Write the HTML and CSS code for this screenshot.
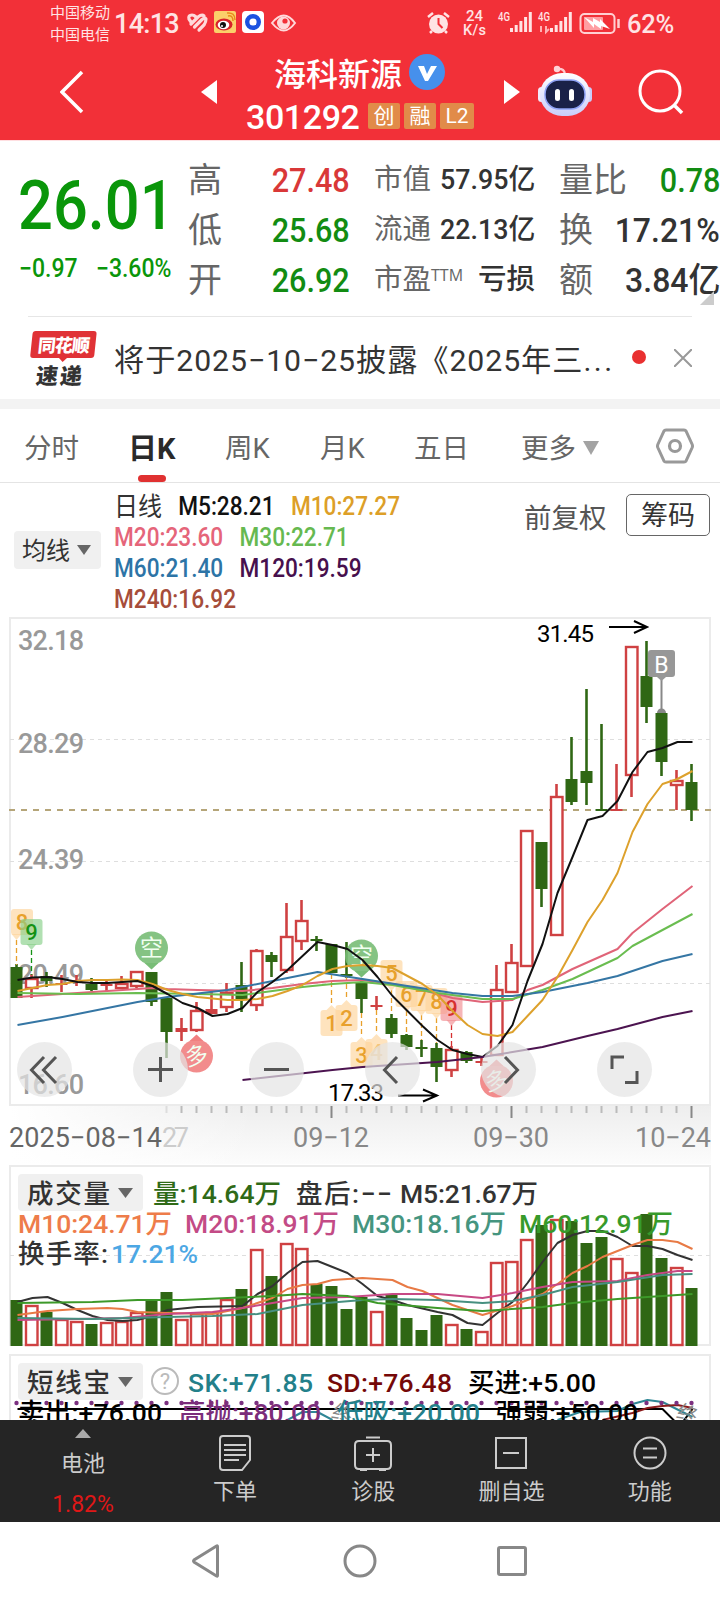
FILE: index.html
```html
<!DOCTYPE html>
<html lang="zh-CN">

<head>
	<meta charset="utf-8">
	<title>海科新源 301292</title>
	<link rel="stylesheet" href="styles.css">
</head>

<body>
	<header class="top">
		<div class="status">
			<div class="carriers"><span>中国移动</span><span>中国电信</span></div>
			<span class="clock">14:13</span>
			<svg class="status-icons" width="112" height="46" viewBox="186 0 112 46">
				<g fill="none" stroke="#ffd9da" stroke-width="3.2" stroke-linecap="round">
					<path d="M191 22l-2-3q-1-4 3-4 2 0 4 2" />
					<path d="M191 24l7-7q4-3 6-1" />
					<path d="M194.500 27l7-7q3-3 4.500-1M199 30l5-5q2-3 2-6" />
				</g>
				<rect x="214" y="11" width="22" height="22" rx="2" fill="#fbd06a" />
				<ellipse cx="224" cy="24.500" rx="8.500" ry="6" fill="#d8232a" />
				<ellipse cx="223.500" cy="25" rx="5.800" ry="4.200" fill="#fff" />
				<circle cx="223" cy="25" r="3" fill="#111" />
				<circle cx="222" cy="26" r="1" fill="#fff" />
				<path d="M228 16q5-1 5 5M227 13q8-1 8 7" fill="none" stroke="#e88a1c" stroke-width="1.500" />
				<rect x="242" y="11" width="22" height="22" rx="4" fill="#fff" />
				<circle cx="253" cy="22" r="5.800" fill="none" stroke="#1c52e0" stroke-width="4.400" />
				<path d="M253 22h3v3h-3z" fill="#fff" />
				<path d="M272 23q12-15 23 0q-11 15-23 0z" fill="none" stroke="#ffd9da" stroke-width="2" />
				<circle cx="283.500" cy="23" r="6.500" fill="#ffd9da" />
				<circle cx="285" cy="21" r="2.600" fill="#f23038" />
			</svg>
			<svg class="status-right" width="200" height="46" viewBox="420 0 200 46">
				<circle cx="438.500" cy="24" r="9.500" fill="#ffe3e4" />
				<path d="M438.500 18v6l4 4" fill="none" stroke="#f23038" stroke-width="2" />
				<path d="M428 17l5-4M449 17l-5-4M432 31l-2 2M445 31l2 2" stroke="#ffe3e4" stroke-width="2.500" />
				<g fill="#ffe3e4" class="num">
					<text x="466" y="21" font-size="15" font-weight="500">24</text>
					<text x="463" y="35" font-size="14.500" font-weight="500" textLength="23">K/s</text>
					<text x="498" y="21" font-size="12" font-weight="500" textLength="12" lengthAdjust="spacingAndGlyphs">4G</text>
					<text x="538" y="21" font-size="12" font-weight="500" textLength="12" lengthAdjust="spacingAndGlyphs">4G</text>
				</g>
				<path d="M511.500 28v4M516.200 25v7M520.900 21v11M525.600 17v15M530.300 12v20M551.500 28v4M556.200 25v7M560.900 21v11M565.600 17v15M570.300 12v20" stroke="#ffe3e4" stroke-width="3" />
				<path d="M541 26v6M546 26v6l3-3" stroke="#ffb0b3" fill="none" stroke-width="2" />
				<rect x="580.500" y="14" width="34" height="19" rx="4" fill="none" stroke="#ffd0d2" stroke-width="2" />
				<rect x="584" y="17" width="19" height="13" rx="1" fill="#ff9ea2" />
				<path d="M584 17l9 5v-4l7 4v-3l10 10-9-3v3l-7-5v4z" fill="#fff" />
				<path d="M618.500 19v9" stroke="#ffd0d2" stroke-width="2.500" />
			</svg>
			<span class="percent">62%</span>
		</div>
		<div class="titlebar">
			<svg class="back" width="24" height="44" viewBox="0 0 24 44">
				<path d="M22 2L2 22l20 20" fill="none" stroke="#fff" stroke-width="3.500" />
			</svg>
			<svg class="prev" width="16" height="24" viewBox="0 0 16 24"><path d="M16 0v24L0 12z" fill="#fff" /></svg>
			<div class="stock">
				<div class="stock-name">
					<span>海科新源</span>
					<svg width="36" height="36" viewBox="0 0 36 36">
						<circle cx="18" cy="18" r="18" fill="#4690ec" />
						<path d="M9 12h6l3 8 4-8h6l-9 15h-3z" fill="#fff" />
					</svg>
				</div>
				<div class="stock-code">
					<span class="code">301292</span>
					<span class="tag">创</span><span class="tag">融</span><span class="tag tag-l2">L2</span>
				</div>
			</div>
			<svg class="next" width="16" height="24" viewBox="0 0 16 24"><path d="M0 0v24l16-12z" fill="#fff" /></svg>
			<svg class="robot" width="56" height="54" viewBox="0 0 56 54">
				<defs>
					<linearGradient id="shell" x2="0" y2="1">
						<stop offset="0" stop-color="#fff" />
						<stop offset="1" stop-color="#c9cdfa" />
					</linearGradient>
				</defs>
				<path d="M20 5q8-1 8 6" fill="none" stroke="#ffc9cf" stroke-width="2.500" />
				<circle cx="20" cy="5" r="3.200" fill="#ffd3d7" />
				<rect x="1" y="23" width="7" height="15" rx="3.500" fill="#f2e9fb" />
				<rect x="48" y="23" width="7" height="15" rx="3.500" fill="#c9cdfa" />
				<rect x="3" y="9" width="50" height="43" rx="22" fill="url(#shell)" />
				<rect x="8" y="16" width="40" height="29" rx="14" fill="#1a2148" stroke="#8fa2f5" stroke-width="1.500" />
				<rect x="18" y="25" width="5" height="12" rx="2.500" fill="#fff" />
				<rect x="32" y="25" width="5" height="12" rx="2.500" fill="#fff" />
			</svg>
			<svg class="search" width="46" height="46" viewBox="0 0 46 46">
				<circle cx="22" cy="22" r="20" fill="none" stroke="#fff" stroke-width="3" />
				<path d="M36 36l8 8" stroke="#fff" stroke-width="3.500" />
			</svg>
		</div>
	</header>

	<section class="quote">
		<div class="price">
			<div class="price-now">26.01</div>
			<div class="price-change"><span>−0.97</span><span>−3.60%</span></div>
		</div>
		<div class="stats stats-wide">
			<div class="stat"><span class="label">高</span><span class="value up">27.48</span></div>
			<div class="stat"><span class="label">低</span><span class="value down">25.68</span></div>
			<div class="stat"><span class="label">开</span><span class="value down">26.92</span></div>
		</div>
		<div class="stats stats-small">
			<div class="stat"><span class="label">市值</span><span class="value">57.95亿</span></div>
			<div class="stat"><span class="label">流通</span><span class="value">22.13亿</span></div>
			<div class="stat"><span class="label">市盈<sup>TTM</sup></span><span class="value plain">亏损</span></div>
		</div>
		<div class="stats">
			<div class="stat"><span class="label">量比</span><span class="value down">0.78</span></div>
			<div class="stat"><span class="label">换</span><span class="value wide">17.21%</span></div>
			<div class="stat"><span class="label">额</span><span class="value wide">3.84亿</span></div>
		</div>
		<div class="corner"></div>
	</section>

	<section class="news">
		<div class="news-logo">
			<div class="news-brand">同花顺</div>
			<div class="news-word">速递</div>
		</div>
		<div class="news-text">将于2025−10−25披露《2025年三<span>...</span></div>
		<div class="news-dot"></div>
		<svg class="news-close" width="18" height="18" viewBox="0 0 18 18">
			<path d="M0 0l18 18M18 0L0 18" stroke="#999" stroke-width="2" />
		</svg>
	</section>

	<nav class="tabs">
		<span class="tab tab-time">分时</span>
		<span class="tab tab-day active">日K</span>
		<span class="tab tab-week">周K</span>
		<span class="tab tab-month">月K</span>
		<span class="tab tab-five">五日</span>
		<span class="tab tab-more">更多<i class="caret"></i></span>
		<svg class="settings" width="38" height="36" viewBox="0 0 38 36">
			<path d="M10 2h18q1.500 0 2.200 1.300l6 13.200q.6 1.500 0 3l-6 13.200q-.7 1.300-2.200 1.300H10q-1.500 0-2.200-1.300l-6-13.200q-.6-1.500 0-3l6-13.200q.7-1.300 2.200-1.300z" fill="none" stroke="#999" stroke-width="3" />
			<circle cx="19" cy="18" r="5.500" fill="none" stroke="#999" stroke-width="3.200" />
		</svg>
	</nav>

	<section class="legend">
		<div class="picker">均线<i class="caret"></i></div>
		<div class="averages">
			<div><span class="line-name">日线</span><span class="m5">M5:28.21</span><span class="m10">M10:27.27</span></div>
			<div><span class="m20">M20:23.60</span><span class="m30">M30:22.71</span></div>
			<div><span class="m60">M60:21.40</span><span class="m120">M120:19.59</span></div>
			<div><span class="m240">M240:16.92</span></div>
		</div>
		<div class="rights">前复权</div>
		<div class="chips">筹码</div>
	</section>

	<svg class="chart" width="720" height="811" viewBox="0 609 720 811">
		<defs>
			<linearGradient id="axis-shade" x2="0" y2="1">
				<stop offset="0" stop-color="#eeeeee" />
				<stop offset="1" stop-color="#fcfcfc" />
			</linearGradient>
			<linearGradient id="axis-fade">
				<stop offset="0" stop-color="#fff" />
				<stop offset=".35" stop-color="#fff" stop-opacity="0" />
			</linearGradient>
		</defs>
		<rect x="10" y="1106" width="701" height="58" fill="url(#axis-shade)" />
		<rect x="10" y="1106" width="701" height="58" fill="url(#axis-fade)" />
		<g class="frame">
			<path d="M10 618H711M10 1105H711M10 617V1106M710 617V1106" />
			<path d="M10 1166H711M10 1165V1346M710 1165V1346M10 1345H711" />
			<path d="M10 1355H711M10 1354V1420M710 1354V1420" />
		</g>
		<path class="grid" d="M10 739.500H711M10 861.500H711M10 983.500H711M10 1255.500H711" />
		<g class="scale num">
			<text x="18" y="650" textLength="66">32.18</text>
			<text x="18" y="753" textLength="66">28.29</text>
			<text x="18" y="869" textLength="66">24.39</text>
			<text x="18" y="984" textLength="66">20.49</text>
			<text x="18" y="1094" textLength="66">16.60</text>
		</g>
		<path class="last-price" d="M9 810H711" />
		<g id="candles"></g>
		<g id="flags"></g>
		<g id="price-lines"></g>

		<g class="num extreme">
			<text x="537" y="642" textLength="57">31.45</text>
			<text x="328" y="1101" textLength="56">17.33</text>
			<path d="M609 627H646M634 621L647 627L634 633M398 1095.500H436M423 1089.500L437 1095.500L423 1101.500" />
		</g>
		<path d="M661.500 680V713" stroke="#888" stroke-width="2" />
		<path d="M657 713a4.500 4.500 0 0 1 9 0z" fill="#888" />
		<path d="M651 650h21q3 0 3 3v21q0 3-3 3h-6l-4.500 4-4.500-4h-6q-3 0-3-3v-21q0-3 3-3z" fill="#979797" />
		<text class="num" x="661.500" y="672.500" font-size="23" fill="#fff" text-anchor="middle">B</text>

		<g id="controls" class="controls">
			<circle cx="44.500" cy="1069.500" r="27.500" />
			<path d="M44 1057L31.500 1070L44 1083M56 1057L43.500 1070L56 1083" />
			<circle cx="160.500" cy="1069.500" r="27.500" />
			<path d="M148 1069.500H173M160.500 1057V1082" />
			<circle cx="276.500" cy="1069.500" r="27.500" />
			<path d="M264 1069.500H289" />
			<circle cx="392.500" cy="1069.500" r="27.500" />
			<path d="M397 1057L384.500 1070L397 1083" />
			<circle cx="508.500" cy="1069.500" r="27.500" />
			<path d="M505 1057L517.500 1070L505 1083" />
			<circle cx="624.500" cy="1069.500" r="27.500" />
			<path d="M612 1069V1057H624M637 1071V1082.500H625" />
		</g>

		<g id="ticks"></g>
		<g class="dates num">
			<text x="9" y="1147" textLength="153" fill="#666">2025−08−14</text>
			<text x="162" y="1147" textLength="27" fill="#ccc">27</text>
			<text x="293" y="1147" textLength="76">09−12</text>
			<text x="473" y="1147" textLength="76">09−30</text>
			<text x="635" y="1147" textLength="76">10−24</text>
		</g>

		<g id="volumes"></g>
		<g id="volume-lines"></g>
		<g id="signal"></g>

		<rect class="box" x="18" y="1174" width="125" height="37" rx="4" />
		<path d="M118 1188h15l-7.500 10z" fill="#666" />
		<rect class="box" x="18" y="1363" width="125" height="37" rx="4" />
		<path d="M118 1377h15l-7.500 10z" fill="#666" />
		<circle cx="165" cy="1381" r="13" fill="none" stroke="#bbb" stroke-width="2" />
		<text class="num" x="165" y="1389" font-size="22" text-anchor="middle" fill="#bbb">?</text>
		<g class="readout num">
			<text x="27" y="1203" textLength="83">成交量</text>
			<text x="153" y="1203" textLength="128" fill="#2f6a17">量:14.64万</text>
			<text x="296" y="1203" textLength="96">盘后:−−</text>
			<text x="400" y="1203" textLength="138">M5:21.67万</text>
			<text x="18" y="1233" textLength="154" fill="#ee7c4a">M10:24.71万</text>
			<text x="185" y="1233" textLength="154" fill="#c34b86">M20:18.91万</text>
			<text x="352" y="1233" textLength="154" fill="#45957f">M30:18.16万</text>
			<text x="519" y="1233" textLength="154" fill="#379a2b">M60:12.91万</text>
			<text x="18" y="1263" textLength="90">换手率:</text>
			<text x="111" y="1263" textLength="87" fill="#4ca7e4">17.21%</text>
			<text x="27" y="1392" textLength="83">短线宝</text>
			<text x="188" y="1392" textLength="125" fill="#23808a">SK:+71.85</text>
			<text x="327" y="1392" textLength="125" fill="#750808">SD:+76.48</text>
			<text x="468" y="1392" textLength="128" fill="#000">买进:+5.00</text>
			<text x="18" y="1422" textLength="144" fill="#000">卖出:+76.00</text>
			<text x="179" y="1422" textLength="142" fill="#7b2c7b">高抛:+80.00</text>
			<text x="337" y="1422" textLength="143" fill="#23808a">低吸:+20.00</text>
			<text x="496" y="1422" textLength="142" fill="#000">强弱:+50.00</text>
		</g>
	</svg>

	<footer class="toolbar">
		<div class="battery">
			<i></i>
			<span>电池</span>
			<b>1.82%</b>
		</div>
		<div class="tool">
			<svg width="38" height="38" viewBox="0 0 38 38">
				<path d="M7 2h24q3 0 3 3v21l-8 10H7q-3 0-3-3V5q0-3 3-3zM8 11h22M8 16h22M8 21h22M8 26h15" />
			</svg>
			<span>下单</span>
		</div>
		<div class="tool">
			<svg width="38" height="38" viewBox="0 0 38 38">
				<path d="M5 7h28q4 0 4 4v20q0 4-4 4H5q-4 0-4-4V11q0-4 4-4zM12 3.500h14M19 14v14M12 21h14M6 36h7M25 36h7" />
			</svg>
			<span>诊股</span>
		</div>
		<div class="tool">
			<svg width="38" height="38" viewBox="0 0 38 38">
				<path d="M4 4h30v30H4zM11 19h16" />
			</svg>
			<span>删自选</span>
		</div>
		<div class="tool">
			<svg width="38" height="38" viewBox="0 0 38 38">
				<circle cx="19" cy="19" r="15.500" />
				<path d="M12 14.500h14M12 23.500h14" />
			</svg>
			<span>功能</span>
		</div>
	</footer>

	<div class="system-nav">
		<svg width="30" height="34" viewBox="0 0 30 34">
			<path d="M26.500 2.500v29q0 1-1 .5L3 18q-1-1 0-2L25.500 2q1-.5 1 .5z" />
		</svg>
		<svg width="34" height="34" viewBox="0 0 34 34"><circle cx="17" cy="17" r="15" /></svg>
		<svg width="32" height="34" viewBox="0 0 32 34"><rect x="2.500" y="3.500" width="27" height="27" rx="1.500" /></svg>
	</div>

	<script src="chart.js"></script>
</body>

</html>
```

FILE: styles.css
```css
body {
	margin: 0;
	width: 720px;
	height: 1600px;
	overflow: hidden;
	background: #fff;
	color: #333;
	font-family: Roboto, 'Noto Sans CJK SC', sans-serif;
}

svg {
	display: block;
	flex: none;
}

i,
b {
	font-style: normal;
	font-weight: normal;
}

.num {
	font-family: Roboto, 'Noto Sans CJK SC', sans-serif;
}

/* status bar and title */
.top {
	height: 140px;
	background: #f23038;
	color: #fff;
	border-bottom: 1px solid #ffdfe1;
}

.status {
	display: flex;
	align-items: center;
	height: 46px;
	color: #ffe3e4;
}

.carriers {
	display: flex;
	flex-direction: column;
	width: 64px;
	margin-left: 50px;
	padding-top: 1px;
	font-size: 15px;
	line-height: 22px;
}

.clock {
	width: 66px;
	margin-top: 2px;
	font-size: 27px;
	font-weight: 500;
	letter-spacing: -0.7px;
}

.status-icons {
	margin-left: 6px;
}

.status-right {
	margin-left: 122px;
}

.percent {
	margin: 2px 0 0 7px;
	font-size: 25.500px;
	font-weight: 500;
	letter-spacing: -0.3px;
}

.titlebar {
	display: flex;
	align-items: center;
	height: 92px;
}

.back {
	margin-left: 60px;
}

.prev {
	margin-left: 117px;
}

.stock {
	width: 257px;
	margin-left: 31px;
}

.stock-name {
	display: flex;
	align-items: center;
	height: 42px;
	padding: 1px 0 0 26px;
	font-size: 32px;
	font-weight: 500;
	gap: 7px;
}

.stock-name span {
	width: 128px;
	white-space: nowrap;
}

.stock-code {
	display: flex;
	align-items: center;
	height: 40px;
	margin-left: -2px;
	padding-top: 1px;
	gap: 4px;
}

.code {
	width: 118px;
	padding-top: 5px;
	font-size: 34px;
	line-height: 36px;
	font-weight: 500;
	letter-spacing: -0.4px;
}

.tag {
	width: 32px;
	height: 26px;
	margin-top: 4px;
	border-radius: 2px;
	background: #e18b49;
	font-size: 21px;
	line-height: 26px;
	text-align: center;
}

.tag-l2 {
	width: 34px;
}

.next {
	margin-left: -1px;
}

.robot {
	margin: -3px 0 0 17px;
}

.search {
	margin-left: 45px;
}

/* quote */
.quote {
	position: relative;
	display: flex;
	height: 175px;
}

.price {
	width: 188px;
	color: #0a960a;
}

.price-now {
	height: 64px;
	margin: 33px 0 0 18px;
	font-size: 69px;
	line-height: 64px;
	font-weight: 500;
	transform: scaleX(.89);
	transform-origin: left;
}

.price-change {
	display: flex;
	gap: 20px;
	margin: 15px 0 0 19px;
	font-size: 25px;
	line-height: 32px;
	font-weight: 500;
	transform: scaleX(.92);
	transform-origin: left;
	white-space: nowrap;
}

.stats {
	width: 161px;
	margin-left: 24px;
	padding-top: 14px;
	font-size: 34px;
}

.stats-wide {
	width: 162px;
	margin-left: 0;
}

.stats-small {
	font-size: 28.500px;
}

.stat {
	display: flex;
	justify-content: space-between;
	height: 50px;
	line-height: 50px;
	white-space: nowrap;
}

.label {
	color: #666;
}

.label sup {
	font-family: "Open Sans", sans-serif;
	font-size: 16px;
	font-weight: 400;
	line-height: 0;
	vertical-align: 8px;
}

.value {
	font-weight: 500;
	transform: scaleX(.9);
	transform-origin: right;
}

.stats-small .value,
.value.wide {
	transform: scaleX(.94);
}

.stats-small .plain {
	transform: none;
}

.up {
	color: #d93838;
}

.down {
	color: #128c12;
}

.corner {
	position: absolute;
	right: 6px;
	bottom: 11px;
	border-bottom: 14px solid #ccc;
	border-left: 14px solid transparent;
}

/* news */
.news {
	display: flex;
	align-items: center;
	height: 82px;
	margin: 0 28px;
	border-top: 1px solid #e6e6e6;
}

.news-logo {
	width: 64px;
	height: 54px;
	margin-left: 2px;
	font-family: 'Noto Sans CJK SC', sans-serif;
	font-weight: 900;
	text-align: center;
	transform: skewX(-6deg);
}

.news-brand {
	position: relative;
	height: 27px;
	border-radius: 3px;
	background: #e03236;
	color: #fff;
	font-size: 18px;
	line-height: 27px;
	letter-spacing: -1px;
}

.news-brand::after {
	content: '';
	position: absolute;
	left: 29px;
	top: 27px;
	border: 4px solid transparent;
	border-top-color: #e03236;
	border-bottom: 0;
}

.news-word {
	font-size: 22px;
	line-height: 33px;
	letter-spacing: 2px;
}

.news-text {
	width: 508px;
	margin-left: 20px;
	font-size: 30.200px;
	letter-spacing: 0.95px;
	white-space: nowrap;
}

.news-text span {
	letter-spacing: 2.500px;
}

.news-dot {
	width: 14px;
	height: 14px;
	margin: -2px 0 0 10px;
	border-radius: 50%;
	background: #e93030;
}

.news-close {
	margin-left: 28px;
}

/* period tabs */
.tabs {
	position: relative;
	display: flex;
	align-items: center;
	height: 73px;
	border-top: 10px solid #f3f3f3;
	border-bottom: 1px solid #e4e4e4;
	color: #666;
	font-size: 27.500px;
	white-space: nowrap;
}

.tab {
	width: 95px;
}

.tab-time {
	width: 104px;
	margin-left: 24px;
}

.tab-day {
	width: 97px;
}

.tab-month {
	width: 94px;
}

.tab-five {
	width: 107px;
}

.tab-more {
	width: 135px;
}

.active {
	position: relative;
	color: #2a2a2a;
	font-size: 29px;
	font-weight: 700;
}

.active::after {
	content: '';
	position: absolute;
	left: 10px;
	bottom: -15px;
	width: 28px;
	height: 7px;
	border-radius: 4px;
	background: #e03131;
}

.caret {
	display: inline-block;
	margin-left: 7px;
	border: 7px solid transparent;
	border-top: 10px solid #666;
	border-bottom: 0;
	vertical-align: 4px;
}

.tab-more .caret {
	border-width: 14px 8.500px 0;
	border-top-color: #a3a3a3;
	vertical-align: 3px;
}

/* moving averages */
.legend {
	display: flex;
	height: 126px;
}

.picker {
	width: 79px;
	height: 37px;
	margin: 48px 0 0 14px;
	padding: 1px 0 0 8px;
	border-radius: 4px;
	background: #f0f0f0;
	font-size: 24px;
	line-height: 39px;
	white-space: nowrap;
}

.averages {
	width: 410px;
	margin: 8px 0 0 13px;
	font-size: 25px;
	line-height: 31px;
	font-weight: 500;
}

.averages div {
	display: flex;
	gap: 18px;
	transform: scaleX(.905);
	transform-origin: left;
	white-space: nowrap;
}

.line-name {
	font-size: 26.500px;
	font-weight: 400;
}

.m5 {
	color: #111;
}

.m10 {
	color: #dd9f28;
}

.m20 {
	color: #e5657a;
}

.m30 {
	color: #66b950;
}

.m60 {
	color: #2d74a6;
}

.m120 {
	color: #47104d;
}

.m240 {
	color: #a64d3a;
}

.rights {
	width: 102px;
	margin-top: 16px;
	font-size: 27.500px;
	line-height: 40px;
	color: #555;
	white-space: nowrap;
}

.chips {
	box-sizing: border-box;
	width: 84px;
	height: 42px;
	margin-top: 11px;
	border: 1.500px solid #666;
	border-radius: 5px;
	font-size: 27px;
	line-height: 43px;
	text-align: center;
}

/* charts */
.frame {
	fill: none;
	stroke: #ebebeb;
	stroke-width: 2;
}

.grid {
	stroke: #dedede;
	stroke-dasharray: 4 4;
}

.last-price {
	stroke: #b5a579;
	stroke-width: 2;
	stroke-dasharray: 6 6;
}

.scale {
	fill: #999;
	font-size: 27px;
	font-weight: 500;
}

.dates {
	fill: #888;
	font-size: 27px;
}

.extreme {
	font-size: 24px;
}

.extreme path {
	fill: none;
	stroke: #000;
	stroke-width: 2;
}

.ma {
	fill: none;
	stroke-width: 2;
	stroke-linejoin: round;
}

.controls circle {
	fill: #e4e4e4;
	opacity: .7;
}

.controls path {
	fill: none;
	stroke: #555;
	stroke-width: 3;
}

.box {
	fill: #f0f0f0;
}

.readout {
	fill: #333;
	font-size: 26.500px;
	font-weight: 500;
}

/* bottom toolbar */
.toolbar {
	display: flex;
	height: 102px;
	background: #252525;
	color: #ccc;
	font-size: 22px;
}

.battery {
	display: flex;
	flex-direction: column;
	align-items: center;
	width: 166px;
}

.battery i {
	margin-top: 9px;
	border: 8px solid transparent;
	border-top: 0;
	border-bottom: 9px solid #aaa;
}

.battery span {
	margin-top: 10px;
	line-height: 32px;
}

.battery b {
	margin-top: 9px;
	color: #df1717;
	font-size: 23px;
	line-height: 32px;
}

.tool {
	display: flex;
	flex-direction: column;
	align-items: center;
	width: 138.200px;
	padding-top: 14px;
}

.tool svg {
	fill: none;
	stroke: #ccc;
	stroke-width: 2;
}

.tool span {
	margin-top: 4px;
	line-height: 32px;
}

.system-nav {
	display: flex;
	align-items: center;
	height: 78px;
	padding-left: 191px;
	gap: 122px;
	fill: none;
	stroke: #888;
	stroke-width: 3;
}

.system-nav svg + svg + svg {
	margin-left: -3px;
}
```

FILE: chart.js
```js
const RED = '#cf4142';
const GREEN = '#2f6714';
const STEP = 15;
const at = i => 16.5 + i * STEP;

function draw(parent, name, attrs, text) {
	const el = document.createElementNS('http://www.w3.org/2000/svg', name);
	Object.entries(attrs).forEach(([k, v]) => el.setAttribute(k, v));
	if (text) el.textContent = text;
	document.querySelector(parent).appendChild(el);
}

// [color, high, body top, body bottom, low, solid], in chart units
const candles = [
	['g', 964, 967, 998, 998], ['r', 974, 979, 988, 998], ['g', 972, 976, 981, 987], ['r', 975, 983, 985, 992],
	['r', 975, 980, 982, 986], ['g', 978, 984, 990, 991], ['r', 980, 984, 986, 992], ['r', 976, 984, 988, 989],
	['r', 971, 972, 986, 988], ['g', 972, 972, 1002, 1006], ['g', 998, 998, 1032, 1058], ['r', 1018, 1028, 1032, 1041, 1],
	['r', 1002, 1011, 1030, 1032], ['r', 992, 1009, 1014, 1014, 1], ['r', 983, 993, 1007, 1012], ['g', 962, 985, 1000, 1012],
	['r', 949, 951, 1005, 1011], ['g', 952, 955, 962, 977], ['r', 903, 937, 970, 973], ['r', 900, 921, 941, 950],
	['g', 936, 939, 941, 951], ['g', 944, 944, 973, 973], ['g', 942, 974, 976, 978], ['g', 978, 983, 999, 1013],
	['r', 996, 1005, 1007, 1010], ['g', 1014, 1018, 1034, 1038], ['g', 1034, 1035, 1047, 1050], ['g', 1040, 1047, 1049, 1057],
	['g', 1043, 1048, 1067, 1082], ['r', 1046, 1050, 1070, 1077], ['g', 1051, 1052, 1061, 1063], ['r', 1058, 1061, 1063, 1066],
	['r', 965, 990, 1055, 1055], ['r', 944, 963, 992, 993], ['r', 831, 831, 966, 966], ['g', 842, 842, 889, 907],
	['r', 784, 797, 935, 935], ['g', 737, 779, 802, 805], ['g', 689, 771, 783, 805], ['g', 724, 809, 811, 811],
	['r', 764, 809, 811, 811], ['r', 647, 647, 775, 797], ['g', 641, 676, 707, 723], ['g', 713, 713, 762, 776],
	['r', 770, 781, 785, 810], ['g', 764, 782, 810, 821],
];
const volumes = [
	1300, 1306, 1312, 1320, 1322, 1324, 1323, 1322, 1313, 1299, 1292, 1320, 1314, 1313, 1300, 1289,
	1250, 1276, 1244, 1249, 1284, 1286, 1309, 1297, 1312, 1294, 1318, 1330, 1315, 1325, 1329, 1332,
	1263, 1262, 1240, 1225, 1220, 1221, 1243, 1237, 1259, 1273, 1214, 1258, 1268, 1288,
];

function bar(parent, x, top, bottom, hollow, color) {
	draw(parent, 'rect', hollow
		? { x: x - 5.5, y: top, width: 11.5, height: bottom - top, fill: '#fff', stroke: color, 'stroke-width': 2.4 }
		: { x: x - 6, y: top, width: 12, height: bottom - top, fill: color });
}

candles.forEach(([type, high, top, bottom, low, solid], i) => {
	const color = type === 'g' ? GREEN : RED;
	draw('#candles', 'path', { d: `M${at(i)} ${high}V${low}`, stroke: color, 'stroke-width': 2.6 });
	bar('#candles', at(i), top, bottom, type === 'r' && bottom - top > 2 && !solid, color);
	bar('#volumes', at(i), volumes[i], type === 'r' ? 1345 : 1346, type === 'r', color);
});

function line(parent, color, points) {
	draw(parent, 'path', { class: 'ma', stroke: color, d: 'M' + points.map(([i, y]) => `${at(i) + 1} ${y}`).join('L') });
}

line('#price-lines', '#e06478', [[0, 997], [2, 995], [4, 993], [6, 991], [9, 988], [10, 989], [12, 990], [15, 991], [17, 988], [19, 984], [21, 981], [23, 980], [25, 984], [27, 990], [29, 998], [31, 1002], [33, 1000], [34, 990], [35, 985], [37, 969], [40, 949], [41, 933], [43, 909], [45, 886]]);
line('#price-lines', '#6abd50', [[0, 993], [4, 994], [8, 993], [12, 994], [15, 995], [17, 991], [19, 987], [21, 984], [23, 982], [25, 985], [28, 993], [31, 999], [33, 999], [35, 990], [37, 979], [40, 958], [41, 946], [43, 930], [45, 914]]);
line('#price-lines', '#3576a4', [[0, 1025], [3, 1017], [4, 1014], [8, 1002], [10, 997], [14, 990], [17, 981], [20, 972], [23, 979], [26, 986], [29, 993], [31, 996], [33, 996], [35, 992], [38, 983], [40, 976], [43, 961], [45, 954]]);
line('#price-lines', '#dda12c', [991, 988, 985, 984, 981, 980, 980, 979.5, 980, 984, 990, 994, 997, 998.5, 1000, 1000, 999, 996, 991, 985, 976, 969, 966, 965, 966, 968, 976, 984, 995, 1011, 1025, 1034, 1036, 1032, 1016, 1000, 977, 950, 922, 900, 873, 832, 804, 784, 779, 771].map((y, i) => [i, y]));
line('#price-lines', '#111', [980, 977.5, 977, 979, 982, 983, 983, 982, 981, 986, 994, 1003, 1008, 1016, 1014, 1008, 992, 982, 970, 956, 942, 945, 949, 960, 977, 996, 1011, 1026, 1040, 1050, 1054, 1057, 1046, 1025, 981, 944, 893, 857, 820, 816, 801, 772, 752, 748, 742, 742].map((y, i) => [i, y]));
line('#price-lines', '#4c1450', [[15, 1080], [18, 1075], [21, 1070], [23, 1067], [28, 1062], [31, 1057], [33, 1052], [35, 1047], [38, 1036], [40, 1029], [43, 1017], [45, 1011]]);

line('#volume-lines', '#333', [[0, 1302], [1, 1298], [2, 1297], [3, 1303], [4, 1310], [5, 1316], [6, 1320], [7, 1321], [8, 1320], [9, 1316], [10, 1310], [12, 1307], [15, 1306], [16, 1294], [17, 1286], [18, 1273], [19, 1262], [20, 1261], [21, 1267], [22, 1273], [23, 1284], [24, 1296], [25, 1300], [26, 1305], [28, 1312], [29, 1315], [30, 1323], [31, 1325], [32, 1313], [33, 1302], [34, 1283], [35, 1262], [36, 1243], [37, 1235], [38, 1231], [39, 1231], [40, 1237], [41, 1246], [42, 1246], [43, 1249], [44, 1255], [45, 1260]]);
line('#volume-lines', '#e87a45', [[0, 1315], [2, 1311], [4, 1309], [6, 1308], [7, 1309], [8, 1312], [10, 1313], [13, 1314], [15, 1308], [17, 1298], [18, 1289], [19, 1285], [20, 1284], [21, 1280], [23, 1278], [25, 1280], [26, 1287], [27, 1291], [29, 1305], [31, 1315], [33, 1306], [35, 1294], [36, 1284], [37, 1273], [38, 1266], [39, 1257], [41, 1245], [42, 1240], [43, 1240], [44, 1242], [45, 1249]]);
line('#volume-lines', '#c74984', [[0, 1320], [4, 1319], [7, 1318], [10, 1314], [13, 1312], [15, 1308], [17, 1303], [19, 1298], [22, 1297], [25, 1294], [28, 1294], [31, 1298], [33, 1293], [35, 1287], [37, 1282], [40, 1281], [42, 1275], [44, 1271], [45, 1271]]);
line('#volume-lines', '#479080', [[0, 1318], [5, 1319], [10, 1317], [13, 1316], [16, 1314], [19, 1305], [23, 1300], [25, 1299], [28, 1300], [31, 1303], [33, 1301], [35, 1295], [37, 1287], [40, 1282], [43, 1275], [45, 1274]]);
line('#volume-lines', '#3d9929', [[0, 1303], [5, 1302], [8, 1300], [11, 1300], [14, 1298], [17, 1296], [19, 1294], [22, 1296], [24, 1303], [28, 1308], [31, 1311], [35, 1307], [37, 1303], [40, 1299], [42, 1297], [45, 1294]]);

// nine-count labels: [text, index, box top, color, side of the pointer, dash start, dash end, center]
const counts = [
	['8', 0, 909, '#e8a02c', 1, 940, 965, 22], ['9', 1, 919, '#159215', 1, 950, 975],
	['1', 21, 1010, '#e8a02c', -1, 974, 1005], ['2', 22, 1005, '#e8a02c', -1, 976, 1000],
	['3', 23, 1042, '#e8a02c', -1, 1013, 1037], ['4', 24, 1039, '#e8a02c', -1, 1010, 1034],
	['5', 25, 960, '#e8a02c', 1, 990, 1014], ['6', 26, 981, '#e8a02c', 1, 1011, 1034],
	['7', 27, 985, '#e8a02c', 1, 1015, 1040], ['8', 28, 988, '#e8a02c', 1, 1018, 1043],
	['9', 29, 995, '#d63030', 1, 1025, 1048],
];
const tints = { '#e8a02c': '#fdd49b', '#159215': '#87cf88', '#d63030': '#f18d92' };
counts.forEach(([text, i, top, color, side, from, to, cx]) => {
	const x = cx || at(i);
	const tip = side > 0 ? top + 31 : top - 5;
	const edge = side > 0 ? top + 25 : top;
	draw('#flags', 'path', { d: `M${at(i)} ${from}V${to}`, stroke: color, 'stroke-width': 1.3, 'stroke-dasharray': '5 3' });
	draw('#flags', 'rect', { x: x - 11, y: top, width: 22, height: 26, rx: 3, fill: tints[color], opacity: .65 });
	draw('#flags', 'path', { d: `M${at(i) - 5} ${edge}h10L${at(i)} ${tip}z`, fill: tints[color], opacity: .65 });
	draw('#flags', 'text', { x, y: top + 21, class: 'num', 'font-size': 22, 'font-weight': 500, 'text-anchor': 'middle', fill: color, opacity: text === '4' ? .45 : 1 }, text);
});

// round signal pins: [text, index, center, color, side of the tip]
[['空', 9, 948, '#78bd76', 1], ['空', 23, 956, '#78bd76', 1], ['多', 12, 1056, '#f17f80', -1], ['多', 32, 1081, '#f17f80', -1]].forEach(([text, i, y, color, side]) => {
	draw('#flags', 'circle', { cx: at(i), cy: y, r: 16.5, fill: color, opacity: .9 });
	draw('#flags', 'path', { d: `M${at(i) - 7} ${y + side * 15}L${at(i)} ${y + side * 21.5}L${at(i) + 7} ${y + side * 15}z`, fill: color });
	draw('#flags', 'text', { x: at(i), y: y + 8, class: 'num', 'font-size': 23, 'text-anchor': 'middle', fill: '#f1fff0', transform: side < 0 ? `rotate(-12 ${at(i)} ${y})` : '' }, text);
});

for (let i = 10; i < 46; i++) {
	const long = i % 12 === 9;
	draw('#ticks', 'path', { d: `M${at(i)} 1106V${long ? 1118 : 1113}`, stroke: long ? '#888' : '#bbb', 'stroke-width': 2, opacity: i === 10 ? .4 : 1 });
}

line('#signal', '#000', [[0, 1409], [43, 1409], [43.8, 1421]]);
line('#signal', '#000', [[44.4, 1421], [45, 1409]]);
line('#signal', '#2f8795', [[18, 1420], [19, 1412], [20, 1412], [21, 1420]]);
line('#signal', '#2f8795', [[36, 1420], [37.5, 1412], [40, 1411], [41, 1404], [42, 1400], [43, 1402], [45, 1417]]);
line('#signal', '#8b1c1c', [[39, 1420], [41, 1413], [42, 1408], [43, 1406], [44, 1405], [45, 1408]]);
for (let i = 0; i < 46; i++) {
	draw('#signal', 'circle', { cx: at(i), cy: 1403, r: 2.2, fill: '#7b3080' });
}
[343, 688].forEach(x => draw('#signal', 'text', { x, y: 1421, class: 'num', 'font-size': 20, 'text-anchor': 'middle', fill: '#888', transform: `rotate(20 ${x} 1412)` }, '终'));
```
